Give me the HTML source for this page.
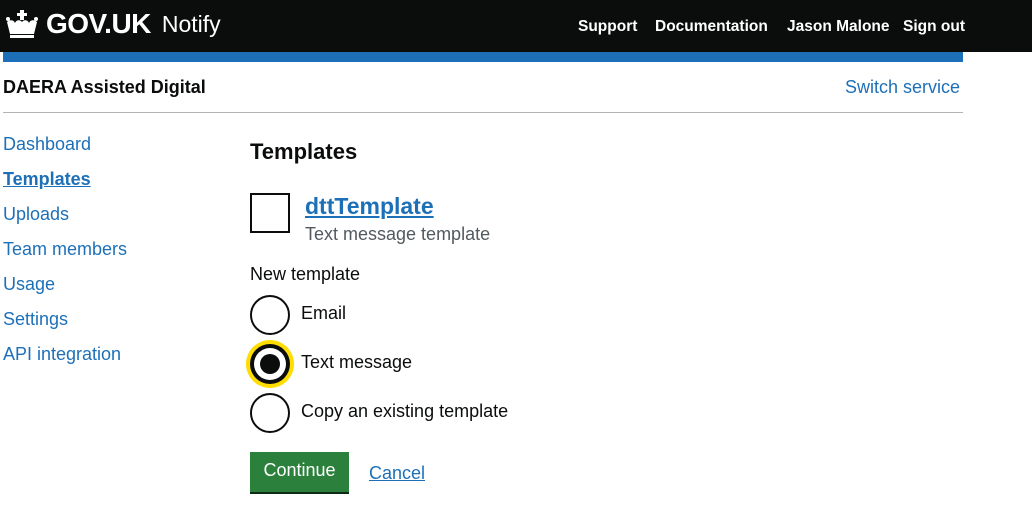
<!DOCTYPE html>
<html><head><meta charset="utf-8"><style>
*{box-sizing:border-box;margin:0;padding:0}
body{width:1032px;height:528px;background:#fff;font-family:"Liberation Sans",Arial,sans-serif;color:#0b0c0c;position:relative;overflow:hidden}
.hdr{position:absolute;left:0;top:0;width:1032px;height:52px;background:#0b0c0c}
.blue{position:absolute;left:3px;top:52px;width:960px;height:10px;background:#1d70b8}
.logo{position:absolute;left:4px;top:8px;color:#fff;display:flex;align-items:center}
.logo b{font-size:28px;font-weight:bold;margin-left:6px;letter-spacing:-0.5px}
.logo span{font-size:23px;margin-left:11px}
.nav{position:absolute;top:18px;color:#fff;font-weight:bold;font-size:15.5px}
a{color:#1d70b8}
.t{position:absolute;white-space:nowrap}
.side{font-size:18px;color:#1d70b8}
.radio{position:absolute;left:250px;width:40px;height:40px;border:2px solid #0b0c0c;border-radius:50%}
</style></head><body>
<div class="hdr"></div>
<div class="logo"><svg width="36" height="32" viewBox="0 0 36 32" fill="#fff"><rect x="16" y="2" width="4" height="10"/><rect x="13" y="5" width="10" height="3"/><path d="M3 14c3-3 7-2 8 1 1-3 5-4 7-1 2-3 6-2 7 1 1-3 5-4 8-1l-3 12H6z"/><rect x="6" y="27" width="24" height="3"/><circle cx="4" cy="11" r="2"/><circle cx="32" cy="11" r="2"/></svg><b>GOV.UK</b><span>Notify</span></div>
<div class="nav" style="left:578px">Support</div>
<div class="nav" style="left:655px">Documentation</div>
<div class="nav" style="left:787px">Jason Malone</div>
<div class="nav" style="left:903px">Sign out</div>
<div class="blue"></div>
<div class="t" style="left:3px;top:77px;font-size:18px;font-weight:bold">DAERA Assisted Digital</div>
<div class="t" style="left:845px;top:77px;font-size:18px;color:#1d70b8">Switch service</div>
<div style="position:absolute;left:3px;top:112px;width:960px;height:1px;background:#b1b4b6"></div>
<div class="t side" style="left:3px;top:134px">Dashboard</div>
<div class="t side" style="left:3px;top:169px;font-weight:bold;text-decoration:underline;color:#1d70b8">Templates</div>
<div class="t side" style="left:3px;top:204px">Uploads</div>
<div class="t side" style="left:3px;top:239px">Team members</div>
<div class="t side" style="left:3px;top:274px">Usage</div>
<div class="t side" style="left:3px;top:309px">Settings</div>
<div class="t side" style="left:3px;top:344px">API integration</div>
<div class="t" style="left:250px;top:139px;font-size:22px;font-weight:bold">Templates</div>
<div style="position:absolute;left:250px;top:193px;width:40px;height:40px;border:2px solid #0b0c0c"></div>
<div class="t" style="left:305px;top:193px;font-size:23px;font-weight:bold;text-decoration:underline;color:#1d70b8">dttTemplate</div>
<div class="t" style="left:305px;top:224px;font-size:18px;color:#505a5f">Text message template</div>
<div class="t" style="left:250px;top:264px;font-size:18px">New template</div>
<div class="radio" style="top:295px"></div>
<div class="t" style="left:301px;top:303px;font-size:18px">Email</div>
<div style="position:absolute;left:246px;top:340px;width:48px;height:48px;border-radius:50%;background:#ffdd00"></div>
<div style="position:absolute;left:250px;top:344px;width:40px;height:40px;border-radius:50%;background:#0b0c0c"></div>
<div style="position:absolute;left:254px;top:348px;width:32px;height:32px;border-radius:50%;background:#fff"></div>
<div style="position:absolute;left:260px;top:354px;width:20px;height:20px;border-radius:50%;background:#0b0c0c"></div>
<div class="t" style="left:301px;top:352px;font-size:18px">Text message</div>
<div class="radio" style="top:393px"></div>
<div class="t" style="left:301px;top:401px;font-size:18px">Copy an existing template</div>
<div style="position:absolute;left:250px;top:452px;width:99px;height:40px;background:#2b813c;box-shadow:0 2px 0 #0f2b16;color:#fff;font-size:18px;text-align:center;line-height:37px">Continue</div>
<div class="t" style="left:369px;top:463px;font-size:18px;text-decoration:underline;color:#1d70b8">Cancel</div>
</body></html>
